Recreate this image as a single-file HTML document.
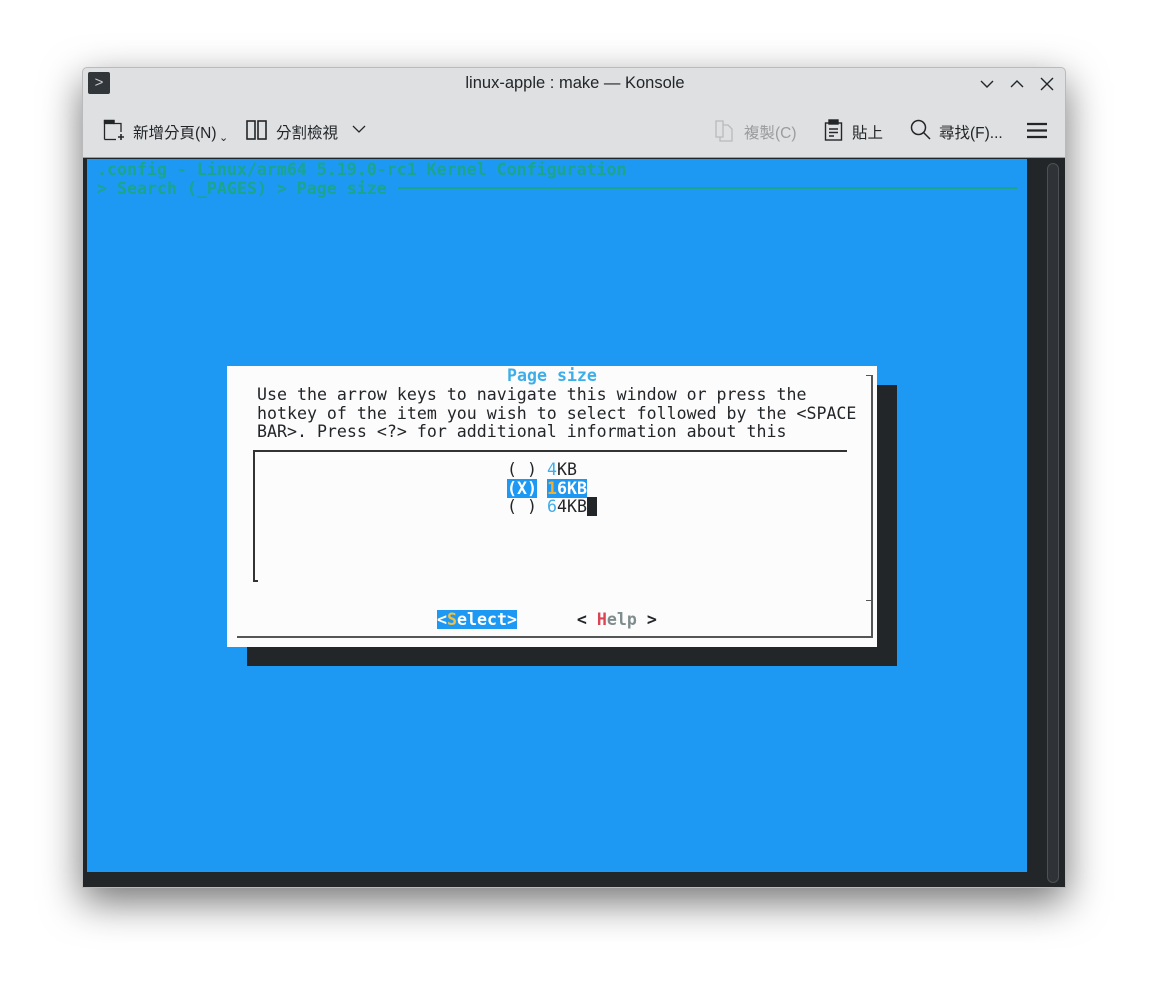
<!DOCTYPE html>
<html><head><meta charset="utf-8"><style>
*{margin:0;padding:0;box-sizing:border-box}
body{width:1150px;height:986px;background:#fff;position:relative;overflow:hidden;font-family:"Liberation Sans","Noto Sans CJK TC",sans-serif}
.abs{position:absolute}
.win{left:82px;top:67px;width:984px;height:821px;background:#dee0e2;border:1px solid #b8babc;border-radius:5px 5px 0 0;box-shadow:0 14px 40px rgba(0,0,0,.55)}
.mono{font-family:"DejaVu Sans Mono","Liberation Mono",monospace;font-size:16.6px;line-height:18.5px;white-space:pre}
.tb{font-size:15.5px;color:#232629}
</style></head><body>
<div class="abs win"></div>
<div class="abs" style="left:88px;top:72px;width:22px;height:22px;background:#31363b;border-radius:2px;color:#ccc;font-size:15px;line-height:21px;text-align:center">&gt;</div>
<div class="abs" style="left:0;width:1150px;top:74px;text-align:center;font-size:16.5px;color:#232629">linux-apple : make — Konsole</div>
<svg class="abs" style="left:978px;top:74px" width="80" height="20" fill="none" stroke="#232629" stroke-width="1.4">
<path d="M3 7 L9 13 L15 7"/><path d="M33 13 L39 7 L45 13"/><path d="M63 4 L75 16 M75 4 L63 16"/></svg>
<svg class="abs" style="left:103px;top:119px" width="24" height="24" fill="none" stroke="#232629" stroke-width="1.3">
<path d="M1.5 20.5 V1.5 H11 V4.5 H18 V13"/><path d="M1.5 20.5 H13"/><rect x="1.5" y="1.5" width="9.5" height="3" fill="#232629"/><path d="M18 15 V21 M15 18 H21" stroke-width="1.6"/></svg>
<div class="abs tb" style="left:133px;top:121px">新增分頁(N)</div>
<div class="abs tb" style="left:219px;top:131px;font-size:11px">⌄</div>
<svg class="abs" style="left:246px;top:120px" width="22" height="20" fill="none" stroke="#232629" stroke-width="1.6"><rect x="1" y="1" width="8" height="18"/><rect x="12" y="1" width="8" height="18"/></svg>
<div class="abs tb" style="left:276px;top:121px">分割檢視</div>
<svg class="abs" style="left:352px;top:124px" width="14" height="10" fill="none" stroke="#232629" stroke-width="1.3"><path d="M1 2 L7 8 L13 2"/></svg>
<svg class="abs" style="left:715px;top:120px" width="20" height="22" fill="none" stroke="#b8babc" stroke-width="1.3"><path d="M1 1 H8 V17 H1 Z"/><path d="M8 5 H13 L17 9 V21 H5 V17"/></svg>
<div class="abs tb" style="left:744px;top:121px;color:#9a9c9e">複製(C)</div>
<svg class="abs" style="left:824px;top:119px" width="20" height="22" fill="none" stroke="#232629" stroke-width="1.4"><rect x="1.5" y="4" width="16" height="17"/><rect x="5" y="1" width="9" height="4" fill="#232629"/><path d="M5 10 H14 M5 13.5 H14 M5 17 H10"/></svg>
<div class="abs tb" style="left:852px;top:121px">貼上</div>
<svg class="abs" style="left:910px;top:119px" width="22" height="22" fill="none" stroke="#232629" stroke-width="1.5"><circle cx="8.5" cy="8.5" r="7"/><path d="M13.5 13.5 L20 20"/></svg>
<div class="abs tb" style="left:939px;top:121px">尋找(F)...</div>
<svg class="abs" style="left:1026px;top:122px" width="22" height="17" stroke="#232629" stroke-width="2.2"><path d="M1 2 H21 M1 8.5 H21 M1 15 H21"/></svg>
<div class="abs" style="left:83px;top:157px;width:982px;height:730px;background:#232629;border-top:1px solid #9a9c9e"></div>
<div class="abs" style="left:87px;top:159px;width:940px;height:713px;background:#1d99f3"></div>
<div class="abs" style="left:1047px;top:163px;width:12px;height:720px;border:1px solid #4d5155;border-radius:6px;background:#2f3337"></div>
<div class="abs mono" style="left:97px;top:161px;color:#1aa58c;font-weight:bold">.config - Linux/arm64 5.19.0-rc1 Kernel Configuration
&gt; Search (_PAGES) &gt; Page size </div>
<div class="abs" style="left:398px;top:187px;width:619px;height:2px;background:#1aa58c"></div>
<div class="abs" style="left:247px;top:385px;width:650px;height:281px;background:#232629"></div>
<div class="abs" style="left:227px;top:366px;width:650px;height:281px;background:#fcfcfc"></div>
<div class="abs" style="left:871px;top:375px;width:2px;height:262px;background:#555"></div>
<div class="abs" style="left:237px;top:636px;width:636px;height:2px;background:#555"></div>
<div class="abs" style="left:866px;top:375px;width:6px;height:1px;background:#555"></div>
<div class="abs" style="left:866px;top:600px;width:6px;height:1px;background:#555"></div>
<div class="abs" style="left:253px;top:450px;width:594px;height:1.5px;background:#333"></div>
<div class="abs" style="left:253px;top:450px;width:1.5px;height:131px;background:#333"></div>
<div class="abs" style="left:253px;top:580px;width:5px;height:1.5px;background:#333"></div>
<div class="abs mono" style="left:507px;top:367px;color:#3daee9;font-weight:bold">Page size</div>
<div class="abs mono" style="left:257px;top:386px;color:#232629">Use the arrow keys to navigate this window or press the
hotkey of the item you wish to select followed by the &lt;SPACE
BAR&gt;. Press &lt;?&gt; for additional information about this</div>
<div class="abs mono" style="left:507px;top:461px;color:#232629">( ) <span style="color:#3daee9">4</span>KB
<span style="background:#1d99f3;color:#fff;font-weight:bold">(X)</span> <span style="background:#1d99f3;color:#fff;font-weight:bold"><span style="color:#f0b030">1</span>6KB</span>
( ) <span style="color:#3daee9">6</span>4KB<span style="background:#232629"> </span></div>
<div class="abs mono" style="left:437px;top:611px;color:#232629;font-weight:bold"><span style="background:#1d99f3;color:#fff">&lt;<span style="color:#f0c040">S</span>elect&gt;</span>      &lt; <span style="color:#da4453">H</span><span style="color:#7f8c8d">elp</span> &gt;</div>
</body></html>
